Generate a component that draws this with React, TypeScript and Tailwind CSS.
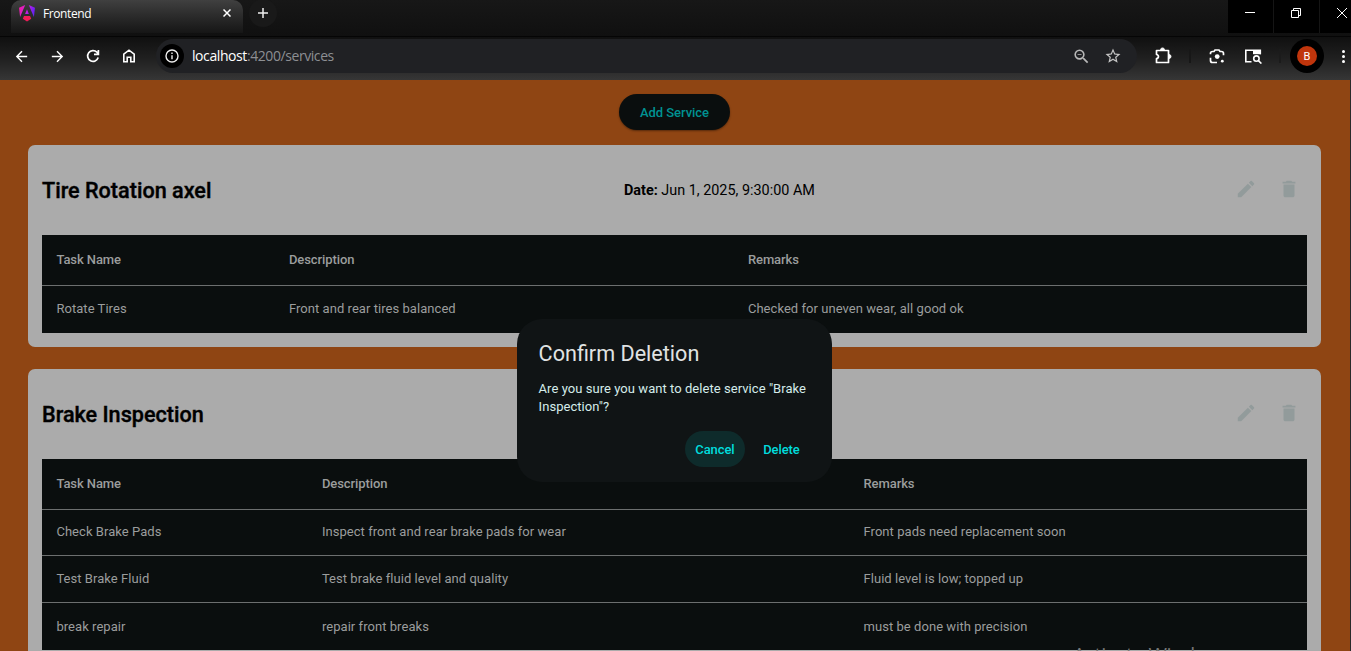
import type { ReactNode } from "react";

const ICONS = {
  back: "M20 11H7.83l5.59-5.59L12 4l-8 8 8 8 1.41-1.41L7.83 13H20v-2z",
  forward: "M12 4l-1.41 1.41L16.17 11H4v2h12.17l-5.58 5.59L12 20l8-8z",
  pencil:
    "M3 17.25V21h3.75L17.81 9.94l-3.75-3.75L3 17.25zM20.71 7.04a1 1 0 0 0 0-1.41l-2.34-2.34a1 1 0 0 0-1.41 0l-1.83 1.83 3.75 3.75 1.83-1.83z",
  trash: "M6 19c0 1.1.9 2 2 2h8c1.1 0 2-.9 2-2V7H6v12zM19 4h-3.5l-1-1h-5l-1 1H5v2h14V4z",
  zoomOut:
    "M15.5 14h-.79l-.28-.27A6.471 6.471 0 0 0 16 9.5 6.5 6.5 0 1 0 9.5 16c1.61 0 3.09-.59 4.23-1.57l.27.28v.79l5 4.99L20.49 19l-4.99-5zm-6 0C7.01 14 5 11.99 5 9.5S7.01 5 9.5 5 14 7.01 14 9.5 11.99 14 9.5 14zM7 9h5v1H7z",
  star: "M22 9.24l-7.19-.62L12 2 9.19 8.63 2 9.24l5.46 4.73L5.82 21 12 17.27 18.18 21l-1.63-7.03L22 9.24zM12 15.4l-3.76 2.27 1-4.28-3.32-2.88 4.38-.38L12 6.1l1.71 4.04 4.38.38-3.32 2.88 1 4.28L12 15.4z",
};

function Icon({ d, className }: { d: string; className: string }) {
  return (
    <svg viewBox="0 0 24 24" fill="currentColor" className={`shrink-0 ${className}`}>
      <path d={d} />
    </svg>
  );
}

function AngularLogo() {
  return (
    <svg viewBox="0 0 16 17" className="h-[17px] w-4 shrink-0">
      <defs>
        <linearGradient id="ng" x1="0" y1="0" x2="1" y2="0.25">
          <stop offset="0" stopColor="#f11f9b" />
          <stop offset="0.5" stopColor="#d71ddf" />
          <stop offset="1" stopColor="#6b22f5" />
        </linearGradient>
      </defs>
      <path
        fill="url(#ng)"
        d="M0 2.8 6.2 0 1.1 11.9zM16 2.8 9.8 0l5.1 11.9zM8 4.2l1.9 4.8H6.1z"
      />
      <path fill="#f21c58" d="M5 11h6l1.2 2.8L8 16.4l-4.2-2.6z" />
    </svg>
  );
}

function TabStrip() {
  return (
    <div className="flex h-9 bg-linear-to-b from-[#171717] to-[#101010]">
      <div className="flex w-[232px] ml-[11px] h-[33px] mb-[3px] rounded-t-[10px] bg-linear-to-b from-[#404040] to-[#161616] pl-2">
        <div className="mt-[4.5px]">
          <AngularLogo />
        </div>
        <span className="ml-2 mt-[5px] grow font-['Open_Sans','Noto_Sans',sans-serif] text-[12px] leading-[17px] tracking-[-0.4px] text-white">
          Frontend
        </span>
        <svg viewBox="0 0 8 8" className="mt-[9px] mr-[12px] size-2 text-white" stroke="currentColor" strokeWidth="1.5">
          <path d="M.5.5l7 7M7.5.5l-7 7" />
        </svg>
      </div>
      <div className="ml-[6px] mt-[-1px] flex size-7 items-center justify-center rounded-full bg-[#191919]">
        <svg viewBox="0 0 10 10" className="size-[10px]" stroke="#eee" strokeWidth="1.5">
          <path d="M5 0v10M0 5h10" />
        </svg>
      </div>
      <div className="ml-auto flex h-[33px] w-[123px] shrink-0 gap-px overflow-hidden bg-[#151515]">
        <div className="w-[45px] shrink-0 bg-black pl-[17px] pt-[12px]">
          <div className="h-px w-[10px] bg-white" />
        </div>
        <div className="w-[45px] shrink-0 bg-black pl-[17px] pt-2">
          <svg viewBox="0 0 11 11" className="size-[11px]" fill="none" stroke="white">
            <path d="M.5 2.5h7v7h-7zM2.5 2.5v-2h7v7h-2" />
          </svg>
        </div>
        <div className="w-[45px] shrink-0 bg-black pl-[17px] pt-2">
          <svg viewBox="0 0 10 10" className="size-[10px]" stroke="white">
            <path d="M0 0l10 10M10 0L0 10" />
          </svg>
        </div>
      </div>
    </div>
  );
}

function Toolbar() {
  return (
    <div className="flex h-11 items-center border-t border-[#050505] bg-linear-to-b from-[#101010] via-[#202020] to-[#363636] pl-[12.5px] pb-[5px] text-white">
      <Icon d={ICONS.back} className="size-[17px]" />
      <Icon d={ICONS.forward} className="ml-[19px] size-[17px]" />
      <svg viewBox="0 0 16 16" className="ml-[19.5px] size-4 shrink-0" fill="none" stroke="white" strokeWidth="1.7">
        <path d="M13.2 9.6A5.4 5.4 0 1 1 11.9 4.2L13.5 6M13.4 2v4.4H9" />
      </svg>
      <svg viewBox="0 0 16 16" className="ml-5 size-4 shrink-0" fill="none" stroke="white" strokeWidth="1.6">
        <path d="M2.8 6.1L8 2.2l5.2 3.9v7.7H9.8V9.2H6.2v4.6H2.8z" />
      </svg>
      <div className="ml-[19px] flex h-[34px] w-[981px] shrink-0 items-center rounded-full bg-[#202124] pl-[4px]">
        <div className="flex size-6 items-center justify-center rounded-full bg-black">
          <svg viewBox="0 0 14 14" className="size-[14px]" fill="none" stroke="#eee" strokeWidth="1.4">
            <circle cx="7" cy="7" r="6" />
            <path d="M7 6.2v4M7 3.5v1.5" />
          </svg>
        </div>
        <span className="ml-2 grow font-['Open_Sans','Noto_Sans',sans-serif] text-[14px] leading-5 tracking-[-0.42px] text-[#8d8f93]">
          <span className="text-white">localhost</span>:4200/services
        </span>
        <Icon d={ICONS.zoomOut} className="size-[19px] text-[#b8b8b8]" />
        <Icon d={ICONS.star} className="ml-[13px] mr-[15px] size-[18px] text-[#c4c4c4]" />
      </div>
      <svg viewBox="0 0 18 18" className="ml-[17px] size-[18px] shrink-0" fill="none" stroke="white" strokeWidth="1.7" strokeLinejoin="round">
        <path d="M2.500 3.500h12v12h-12v-3.800c2.600-.3 2.600-3.900 0-4.200z" />
        <path d="M6.500 2.900a2 2 0 0 1 4 0zM15 7.500a2 2 0 0 1 0 4z" fill="white" strokeWidth="0.8" />
      </svg>
      <div className="ml-[17px] h-[14px] w-[2px] shrink-0 bg-[#171717]" />
      <svg viewBox="0 0 16 16" className="ml-[18px] size-4 shrink-0" fill="none" stroke="white" strokeWidth="1.7">
        <path d="M1.500 6.300V5.500q0-2 2-2H5l1-1.500h4l1 1.500h1.500q2 0 2 2v1.800M1.500 9.700v2.800q0 2 2 2H8" />
        <circle cx="8.200" cy="8.600" r="2.400" fill="white" stroke="none" />
        <circle cx="13.300" cy="13.200" r="1.400" fill="white" stroke="none" />
      </svg>
      <svg viewBox="0 0 18 16" className="ml-[19px] h-4 w-[18px] shrink-0" fill="none" stroke="white" strokeWidth="1.600">
        <path d="M7.500 13.700H1.800V2.200h14.500v4" />
        <path d="M9 2h8v4.200H9z" fill="white" stroke="none" />
        <circle cx="12.400" cy="10.600" r="2.700" />
        <path d="M14.400 12.600l3 3" />
      </svg>
      <div className="ml-[17px] h-[14px] w-[2px] shrink-0 bg-[#1b1b1b]" />
      <div className="ml-[9px] flex size-[34px] shrink-0 items-center justify-center rounded-full bg-black">
        <div className="flex size-5 items-center justify-center rounded-full bg-[#c0350c] font-[Roboto,sans-serif] text-[11px] leading-none text-white">
          B
        </div>
      </div>
      <div className="ml-[17.5px] flex shrink-0 flex-col gap-[2px]">
        <div className="size-[3px] rounded-full bg-white" />
        <div className="size-[3px] rounded-full bg-white" />
        <div className="size-[3px] rounded-full bg-white" />
      </div>
    </div>
  );
}

interface Service {
  name: string;
  date?: string;
  columns: string;
  rows: { cells: string[]; height: string }[];
}

const SERVICES: Service[] = [
  {
    name: "Tire Rotation axel",
    date: "Jun 1, 2025, 9:30:00 AM",
    columns: "grid-cols-[232.5px_459px_1fr]",
    rows: [
      { cells: ["Rotate Tires", "Front and rear tires balanced", "Checked for uneven wear, all good ok"], height: "h-[47px] pb-px" },
    ],
  },
  {
    name: "Brake Inspection",
    columns: "grid-cols-[265.5px_541.6px_1fr]",
    rows: [
      { cells: ["Check Brake Pads", "Inspect front and rear brake pads for wear", "Front pads need replacement soon"], height: "h-[46px] border-b pb-px" },
      { cells: ["Test Brake Fluid", "Test brake fluid level and quality", "Fluid level is low; topped up"], height: "h-[47px] border-b" },
      { cells: ["break repair", "repair front breaks", "must be done with precision"], height: "h-[47px] pt-px" },
    ],
  },
];

function Row({ columns, className, children }: { columns: string; className: string; children: ReactNode }) {
  return <div className={`grid items-center border-[#6c6f6f] pl-[14.4px] ${columns} ${className}`}>{children}</div>;
}

function ServiceCard({ service }: { service: Service }) {
  return (
    <section className="rounded-[7px] bg-[#ababab] px-[14px] pb-[14px]">
      <div className="grid h-[90px] grid-cols-3 items-center">
        <h2 className="pt-[2px] text-[21.6px] font-medium text-black [-webkit-text-stroke:0.4px_black]">{service.name}</h2>
        <div className="pl-[160.3px] pt-px whitespace-nowrap text-[14.4px] text-black">
          {service.date && (
            <>
              <b>Date:</b> {service.date}
            </>
          )}
        </div>
        <div className="flex justify-end gap-[21px] pr-[7px] pb-[2px] text-[#929b9b]">
          <Icon d={ICONS.pencil} className="size-[22px]" />
          <Icon d={ICONS.trash} className="size-[22px]" />
        </div>
      </div>
      <div className="bg-[#0a0e0e] text-[13px] leading-[18px] tracking-[0.05px] text-[#9b9d9d]">
        <Row columns={service.columns} className="h-[51px] border-b font-medium tracking-[-0.08px]">
          <span>Task Name</span>
          <span>Description</span>
          <span>Remarks</span>
        </Row>
        {service.rows.map((row) => (
          <Row key={row.cells[0]} columns={service.columns} className={row.height}>
            {row.cells.map((cell) => (
              <span key={cell}>{cell}</span>
            ))}
          </Row>
        ))}
      </div>
    </section>
  );
}

function ConfirmDialog() {
  return (
    <div
      role="dialog"
      className="absolute left-[517px] top-[319px] flex h-[163px] w-[315px] flex-col rounded-[25px] bg-[#101415] px-[21.6px] pt-[20px]"
    >
      <h1 className="text-[21.6px] leading-[29px] text-[#e0e3e3]">Confirm Deletion</h1>
      <p className="mt-3 text-[13px] leading-[18px] tracking-[0.05px] whitespace-nowrap text-[#d5ecea]">
        Are you sure you want to delete service "Brake
        <br />
        Inspection"?
      </p>
      <div className="-mr-px mt-[15px] flex h-9 justify-end gap-[7px] text-[13px] font-medium tracking-[-0.1px] text-[#00dddd]">
        <button className="w-[60px] rounded-full bg-[#0e2b2b] pt-px pr-px">Cancel</button>
        <button className="w-[59px] pt-px pr-px">Delete</button>
      </div>
    </div>
  );
}

export default function App() {
  return (
    <div className="relative flex h-[651px] w-[1351px] flex-col overflow-hidden bg-black font-[Roboto,sans-serif]">
      <TabStrip />
      <Toolbar />
      <main className="h-[571px] overflow-hidden border-r border-[#2a2a2a] bg-[#8f4513] px-7 pt-[14px] pr-[29px]">
        <div className="mb-[15px] flex justify-center">
          <button className="h-9 w-[111px] rounded-full bg-[#0a0e0e] pt-px text-[13px] font-medium tracking-[-0.05px] text-[#009292] shadow-[0_1px_2px_rgba(0,0,0,0.4)]">
            Add Service
          </button>
        </div>
        <div className="flex flex-col gap-[22px]">
          {SERVICES.map((service) => (
            <ServiceCard key={service.name} service={service} />
          ))}
        </div>
      </main>
      <ConfirmDialog />
      <div className="absolute left-[1073px] top-[641px] font-['Open_Sans',sans-serif] text-[20px] leading-7 tracking-[-0.4px] whitespace-nowrap text-[#777]">
        Activate Windows
      </div>
    </div>
  );
}
